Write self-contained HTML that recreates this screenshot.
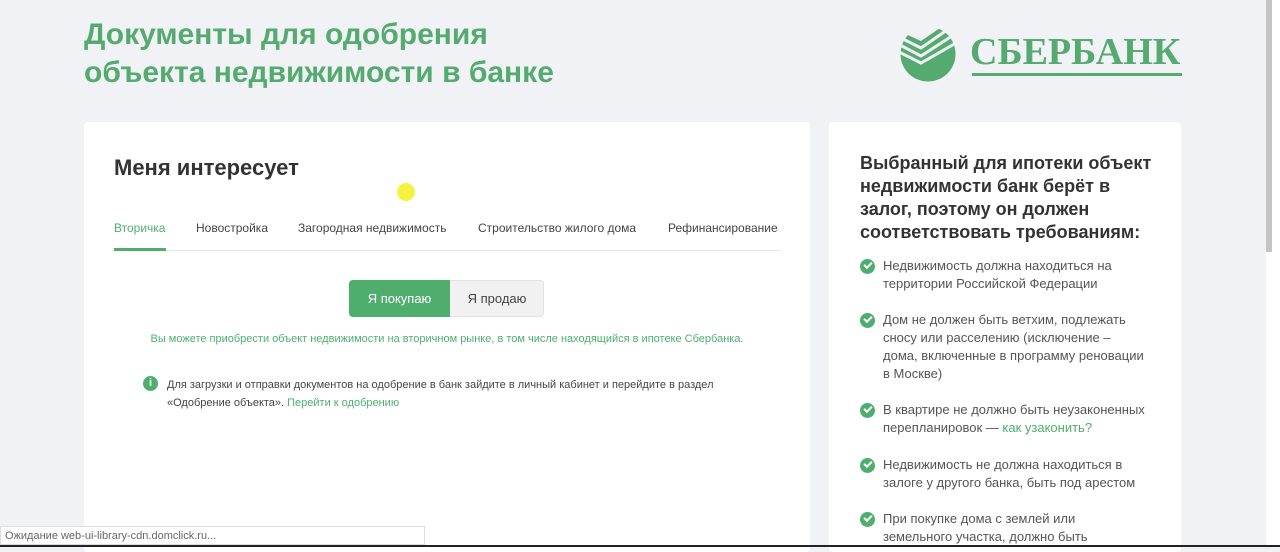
<!DOCTYPE html>
<html><head><meta charset="utf-8"><style>
*{margin:0;padding:0;box-sizing:border-box}
body{width:1280px;height:547px;overflow:hidden;background:#f0f2f5;font-family:"Liberation Sans",Arial,sans-serif;position:relative}
.abs{position:absolute}
h1{position:absolute;left:84px;top:16px;font-size:30px;line-height:38px;color:#55ab6f;font-weight:bold}
.card{position:absolute;background:#fff;border-radius:4px}
.tab{position:absolute;top:221px;font-size:12px;color:#444}
.li{position:absolute;left:883px;font-size:13px;line-height:18px;color:#555;width:290px}
.chk{position:absolute;left:860px;width:15px;height:15px;border-radius:50%;background:#4fae6e}
.chk:after{content:"";position:absolute;left:4px;top:3px;width:6px;height:3px;border-left:2px solid #fff;border-bottom:2px solid #fff;transform:rotate(-45deg)}
</style></head><body>
<h1>Документы для одобрения<br>объекта недвижимости в банке</h1>
<svg class="abs" style="left:899px;top:26px" width="60" height="56" viewBox="0 0 60 56">
<circle cx="29" cy="28" r="27.5" fill="#55ab6f"/>
<path d="M2 12 L22 22 L48 4" stroke="#f0f2f5" stroke-width="3" fill="none"/>
<path d="M1 19 L22 30 L53 10" stroke="#f0f2f5" stroke-width="3" fill="none"/>
<path d="M0 26 L22 37 L57 17" stroke="#f0f2f5" stroke-width="3" fill="none"/>
<path d="M0 5 L22 15 L44 0 L60 0 L60 -2 L-2 -2 Z" fill="#f0f2f5"/>
</svg>
<div class="abs" style="left:970px;top:31px;font-family:'Liberation Serif',serif;font-weight:bold;font-size:38px;line-height:42px;color:#55ab6f">СБЕРБАНК</div>
<div class="abs" style="left:972px;top:73px;width:210px;height:3px;background:#55ab6f"></div>

<div class="card" style="left:84px;top:122px;width:726px;height:430px"></div>
<div class="abs" style="left:114px;top:155px;font-size:22px;font-weight:bold;color:#333">Меня интересует</div>
<div class="abs" style="left:397px;top:183px;width:18px;height:18px;border-radius:50%;background:#f4f020;opacity:.85"></div>
<div class="tab" style="left:114px;color:#4fae6e">Вторичка</div>
<div class="tab" style="left:196px">Новостройка</div>
<div class="tab" style="left:298px">Загородная недвижимость</div>
<div class="tab" style="left:478px">Строительство жилого дома</div>
<div class="tab" style="left:668px">Рефинансирование</div>
<div class="abs" style="left:114px;top:250px;width:667px;height:1px;background:#e8e8e8"></div>
<div class="abs" style="left:114px;top:248px;width:52px;height:3px;background:#4fae6e"></div>
<div class="abs" style="left:349px;top:280px;width:195px;height:37px;border-radius:4px;background:#f1f1f1;border:1px solid #e3e3e3"></div>
<div class="abs" style="left:349px;top:280px;width:101px;height:37px;border-radius:4px 0 0 4px;background:#4fae6e;color:#fff;font-size:13px;line-height:37px;text-align:center">Я покупаю</div>
<div class="abs" style="left:450px;top:280px;width:94px;height:37px;color:#444;font-size:13px;line-height:37px;text-align:center">Я продаю</div>
<div class="abs" style="left:84px;top:333px;width:726px;text-align:center;font-size:11px;color:#4fae6e">Вы можете приобрести объект недвижимости на вторичном рынке, в том числе находящийся в ипотеке Сбербанка.</div>
<div class="abs" style="left:143px;top:376px;width:15px;height:15px;border-radius:50%;background:#4fae6e;color:#fff;font-size:11px;font-weight:bold;text-align:center;line-height:15px">i</div>
<div class="abs" style="left:167px;top:376px;font-size:11px;line-height:18px;color:#444;width:600px">Для загрузки и отправки документов на одобрение в банк зайдите в личный кабинет и перейдите в раздел<br>«Одобрение объекта». <span style="color:#4fae6e">Перейти к одобрению</span></div>

<div class="card" style="left:829px;top:122px;width:352px;height:430px"></div>
<div class="abs" style="left:860px;top:152px;font-size:18px;line-height:23px;font-weight:bold;color:#333;width:300px">Выбранный для ипотеки объект<br>недвижимости банк берёт в<br>залог, поэтому он должен<br>соответствовать требованиям:</div>
<div class="chk" style="top:259px"></div><div class="li" style="top:257px">Недвижимость должна находиться на<br>территории Российской Федерации</div>
<div class="chk" style="top:313px"></div><div class="li" style="top:311px">Дом не должен быть ветхим, подлежать<br>сносу или расселению (исключение –<br>дома, включенные в программу реновации<br>в Москве)</div>
<div class="chk" style="top:403px"></div><div class="li" style="top:401px">В квартире не должно быть неузаконенных<br>перепланировок — <span style="color:#4fae6e">как узаконить?</span></div>
<div class="chk" style="top:458px"></div><div class="li" style="top:456px">Недвижимость не должна находиться в<br>залоге у другого банка, быть под арестом</div>
<div class="chk" style="top:512px"></div><div class="li" style="top:510px">При покупке дома с землей или<br>земельного участка, должно быть</div>

<div class="abs" style="left:1266px;top:0;width:14px;height:547px;background:#fff"></div>
<div class="abs" style="left:1266px;top:0;width:6px;height:252px;background:#c4c4c4"></div>
<div class="abs" style="left:0;top:526px;width:425px;height:19px;background:#fff;border:1px solid #ddd;font-size:11px;color:#666;padding-left:4px;line-height:18px">Ожидание web-ui-library-cdn.domclick.ru...</div>
<div class="abs" style="left:0;top:545px;width:1280px;height:2px;background:#222"></div>
</body></html>
